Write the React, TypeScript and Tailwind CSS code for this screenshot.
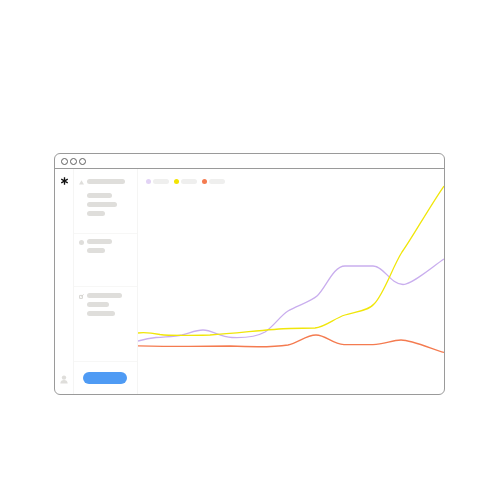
function Bar({ className }: { className: string }) {
  return <div className={`h-[5px] rounded-full bg-[#dfdedb] ${className}`} />;
}

function LegendItem({ dot }: { dot: string }) {
  return (
    <div className="flex items-center gap-[2px]">
      <div className={`size-[5px] rounded-full ${dot}`} />
      <div className="h-[5px] w-[16px] rounded-full bg-[#efefee]" />
    </div>
  );
}

function Chart() {
  return (
    <svg
      viewBox="138 169 306 225"
      className="absolute inset-0 size-full"
      fill="none"
      strokeWidth="1.3"
    >
      <path
        stroke="#c9aeee"
        d="M138 341 C145 339 150 338 156 337.5 C168 336.5 175 336.5 182 335 C190 333 196 330 203 330 C212 330 220 337 232 337.5 C246 338 258 336 265 332 C274 326 280 316 288 311 C296 306 310 302 317 296 C326 288 333 266 345 266 L373 266 C384 266 390 284 403 284.5 C412 284.5 432 267 444 259"
      />
      <path
        stroke="#f0e60a"
        d="M138 333 C146 332 152 333 160 334.5 C170 336 190 335.5 210 335 C240 333 270 329 290 328.5 L315 328 C325 327 335 318 345 315 C355 312 368 311 374 304 C384 294 392 268 402 252 C412 238 430 206 444 186"
      />
      <path
        stroke="#f47b50"
        d="M138 345.8 C170 346.5 200 346.5 230 346 C250 347 275 347 288 345 C298 343 306 335 316 335 C326 335 332 344 344 344.6 L373 344.6 C384 344.6 392 340 401 340 C412 340 432 349 444 352.5"
      />
    </svg>
  );
}

export default function App() {
  return (
    <div className="h-[500px] w-[500px] bg-white px-[54px] pt-[153px] font-['Liberation_Sans',sans-serif]">
      <div className="flex h-[242px] w-[391px] flex-col overflow-hidden rounded-[6px] border border-[#9a9a9a]">
        <div className="flex h-[15px] shrink-0 items-center gap-[2px] border-b border-[#9a9a9a] pl-[6px]">
          <div className="size-[7px] rounded-full border border-[#5f5f5f]" />
          <div className="size-[7px] rounded-full border border-[#5f5f5f]" />
          <div className="size-[7px] rounded-full border border-[#5f5f5f]" />
        </div>
        <div className="flex min-h-0 flex-1">
          <div className="flex w-[19px] shrink-0 flex-col items-center justify-between border-r border-[#f5f5f4] pb-[10px] pt-[8px]">
            <svg viewBox="0 0 8 9" className="h-[8px] w-[7px]" stroke="#111" strokeWidth="1.5">
              <path d="M4 0.2V8.8M0.3 2.3L7.7 6.7M7.7 2.3L0.3 6.7" />
            </svg>
            <svg viewBox="0 0 8 9" className="h-[9px] w-[8px]" fill="#dfdedb">
              <circle cx="4" cy="2.6" r="2.2" />
              <path d="M0.3 8.6C0.3 6 2 5 4 5S7.7 6 7.7 8.6Z" />
            </svg>
          </div>
          <div className="flex w-[64px] shrink-0 flex-col border-r border-[#f5f5f4]">
            <div className="flex h-[65px] shrink-0 gap-[3px] border-b border-[#f7f7f6] pl-[5px] pt-[10px]">
              <svg viewBox="0 0 5 5" className="mt-[1px] size-[5px]" fill="#dfdedb">
                <path d="M2.5 0.3L5 4.6H0Z" />
              </svg>
              <div className="flex flex-col">
                <Bar className="w-[38px]" />
                <Bar className="mt-[9px] w-[25px]" />
                <Bar className="mt-[4px] w-[30px]" />
                <Bar className="mt-[4px] w-[18px]" />
              </div>
            </div>
            <div className="flex h-[53px] shrink-0 gap-[3px] border-b border-[#f7f7f6] pl-[5px] pt-[5px]">
              <div className="mt-[1px] size-[5px] rounded-full bg-[#dfdedb]" />
              <div className="flex flex-col gap-[4px]">
                <Bar className="w-[25px]" />
                <Bar className="w-[18px]" />
              </div>
            </div>
            <div className="flex h-[75px] shrink-0 gap-[3px] border-b border-[#f7f7f6] pl-[5px] pt-[6px]">
              <svg viewBox="0 0 5 5" className="mt-[1px] size-[5px]" fill="none" stroke="#d5d4d1" strokeWidth="1">
                <path d="M0.6 1.4H3.4V4.4H0.6ZM2.4 2.4L4.6 0.5" />
              </svg>
              <div className="flex flex-col gap-[4px]">
                <Bar className="w-[35px]" />
                <Bar className="w-[22px]" />
                <Bar className="w-[28px]" />
              </div>
            </div>
            <div className="flex flex-1 items-center justify-center pr-[2px]">
              <div className="h-[12px] w-[44px] rounded-full bg-[#4f9bf4]" />
            </div>
          </div>
          <div className="relative flex-1">
            <Chart />
            <div className="relative flex gap-[5px] pl-[8px] pt-[10px]">
              <LegendItem dot="bg-[#e2d3f5]" />
              <LegendItem dot="bg-[#f2e402]" />
              <LegendItem dot="bg-[#f47b50]" />
            </div>
          </div>
        </div>
      </div>
    </div>
  );
}
